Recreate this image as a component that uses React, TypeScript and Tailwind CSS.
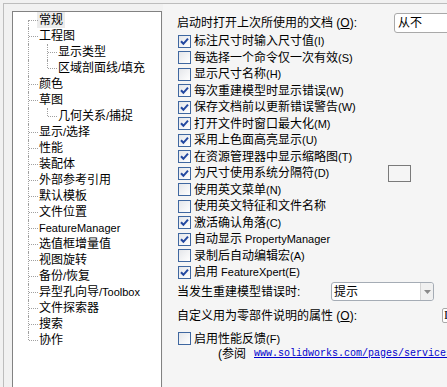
import React from "react";

const FONT = "font-['Liberation_Sans','Noto_Sans_CJK_SC',sans-serif]";

// latin runs are drawn a bit smaller, as in the original dialog
function T({ s }: { s: string }) {
  const parts = s.split(/([\x00-\xff]+)/).filter((p) => p !== "");
  return (
    <>
      {parts.map((p, i) =>
        /^[\x00-\xff]+$/.test(p) ? (
          <span key={i} className="text-[11px]">
            {p}
          </span>
        ) : (
          <span key={i}>{p}</span>
        )
      )}
    </>
  );
}

const tree: [string, number][] = [
  ["常规", 0],
  ["工程图", 0],
  ["显示类型", 1],
  ["区域剖面线/填充", 1],
  ["颜色", 0],
  ["草图", 0],
  ["几何关系/捕捉", 1],
  ["显示/选择", 0],
  ["性能", 0],
  ["装配体", 0],
  ["外部参考引用", 0],
  ["默认模板", 0],
  ["文件位置", 0],
  ["FeatureManager", 0],
  ["选值框增量值", 0],
  ["视图旋转", 0],
  ["备份/恢复", 0],
  ["异型孔向导/Toolbox", 0],
  ["文件探索器", 0],
  ["搜索", 0],
  ["协作", 0],
];

const options: [string, boolean][] = [
  ["标注尺寸时输入尺寸值(I)", true],
  ["每选择一个命令仅一次有效(S)", false],
  ["显示尺寸名称(H)", false],
  ["每次重建模型时显示错误(W)", true],
  ["保存文档前以更新错误警告(W)", true],
  ["打开文件时窗口最大化(M)", true],
  ["采用上色面高亮显示(U)", true],
  ["在资源管理器中显示缩略图(T)", true],
  ["为尺寸使用系统分隔符(D)", true],
  ["使用英文菜单(N)", false],
  ["使用英文特征和文件名称", false],
  ["激活确认角落(C)", true],
  ["自动显示 PropertyManager", true],
  ["录制后自动编辑宏(A)", false],
  ["启用 FeatureXpert(E)", true],
];

function Check({ on }: { on: boolean }) {
  return (
    <span className="w-[13px] h-[13px] shrink-0 border border-[#3f67a0] bg-gradient-to-br from-[#e4e6ea] to-white flex items-center justify-center">
      {on && (
        <svg width="9" height="9" viewBox="0 0 9 9">
          <path d="M1 4.2 L3.4 6.8 L8 1.6" stroke="#2348a0" strokeWidth="2" fill="none" />
        </svg>
      )}
    </span>
  );
}

function TreeRow({ i }: { i: number }) {
  const [label, level] = tree[i];
  const last = i === tree.length - 1;
  const nextChild = tree[i + 1] && tree[i + 1][1] === 1;
  return (
    <div className={`relative h-[16px] flex items-center ${level ? "pl-[45px]" : "pl-[26px]"}`}>
      {/* trunk */}
      <span
        className={`absolute left-[15px] border-l border-dotted border-[#a0a0a0] ${
          i === 0 ? "top-[8px] bottom-0" : last ? "top-0 h-[8px]" : "top-0 bottom-0"
        }`}
      />
      {level === 0 ? (
        <span className="absolute left-[16px] top-[8px] w-[9px] border-t border-dotted border-[#a0a0a0]" />
      ) : (
        <>
          <span
            className={`absolute left-[34px] border-l border-dotted border-[#a0a0a0] ${
              nextChild ? "top-0 bottom-0" : "top-0 h-[8px]"
            }`}
          />
          <span className="absolute left-[35px] top-[8px] w-[9px] border-t border-dotted border-[#a0a0a0]" />
        </>
      )}
      <span className={`leading-[16px] whitespace-nowrap ${i === 0 ? "bg-[#ececec] -ml-[2px] px-[2px]" : ""}`}>
        <T s={label} />
      </span>
    </div>
  );
}

export default function App() {
  return (
    <div className={`w-[447px] h-[387px] overflow-hidden bg-[#f1f1f1] text-[12px] text-black ${FONT}`}>
      <div className="h-[3px]" />
      <div className="ml-[3px] h-[384px] border-t border-l border-[#bdbdbd] flex">
        {/* left tree */}
        <div className="w-[159px] shrink-0 pl-[8px] pt-[7px]">
          <div className="w-[150px] h-[400px] bg-white border border-[#828282] pt-[0px]">
            {tree.map((_, i) => (
              <TreeRow key={i} i={i} />
            ))}
          </div>
        </div>

        {/* right options */}
        <div className="flex-1 bg-[#f5f5f5] pl-[14px] pt-[9px] overflow-hidden">
          <div className="h-[20px] flex items-center">
            <span className="w-[217px] shrink-0 whitespace-nowrap">
              启动时打开上次所使用的文档 (<u>O</u>):
            </span>
            <span className="w-[80px] h-[20px] shrink-0 bg-white border border-[#a9a9a9] rounded-[3px] flex items-center pl-[3px]">
              从不
            </span>
          </div>

          {options.map(([label, on], i) => (
            <div key={i} className="h-[16.5px] flex items-center pl-[1px]">
              <Check on={on} />
              {i === 8 ? (
                <>
                  <span className="w-[197px] shrink-0 pl-[3px] whitespace-nowrap">
                    <T s={label} />
                  </span>
                  <span className="w-[23px] h-[17px] shrink-0 border border-[#7a7a7a]" />
                </>
              ) : (
                <span className="pl-[3px] whitespace-nowrap">
                  <T s={label} />
                </span>
              )}
            </div>
          ))}

          <div className="h-[22px] flex items-center">
            <span className="w-[154px] shrink-0 whitespace-nowrap">当发生重建模型错误时:</span>
            <span className="w-[103px] h-[19px] shrink-0 bg-white border border-[#a5acb5] rounded-[3px] flex items-center">
              <span className="flex-1 pl-[2px]">提示</span>
              <span className="w-[13px] h-full border-l border-[#d4d4d4] bg-[#f0f0f0] rounded-r-[3px] flex items-center justify-center">
                <svg width="7" height="4" viewBox="0 0 7 4">
                  <path d="M0 0 H7 L3.5 4 Z" fill="#8a8a8a" />
                </svg>
              </span>
            </span>
          </div>

          <div className="h-[26px] flex items-center">
            <span className="w-[265px] shrink-0 whitespace-nowrap">
              自定义用为零部件说明的属性 (<u>O</u>):
            </span>
            <span className="w-[40px] h-[15px] shrink-0 bg-white border border-[#a9a9a9] rounded-[2px] pl-[1px] leading-[13px] font-['Liberation_Serif',serif]">
              I
            </span>
          </div>

          <div className="mt-[2px] h-[16px] flex items-center pl-[1px]">
            <Check on={false} />
            <span className="pl-[3px] whitespace-nowrap">
              <T s="启用性能反馈(F)" />
            </span>
          </div>

          <div className="h-[14px] flex items-center pl-[41px] whitespace-nowrap">
            <span>(参阅</span>
            <span className="ml-[8px] text-[10px] text-[#0000cc] underline font-['Liberation_Mono',monospace]">
              www.solidworks.com/pages/services/
            </span>
          </div>
        </div>
      </div>
    </div>
  );
}
